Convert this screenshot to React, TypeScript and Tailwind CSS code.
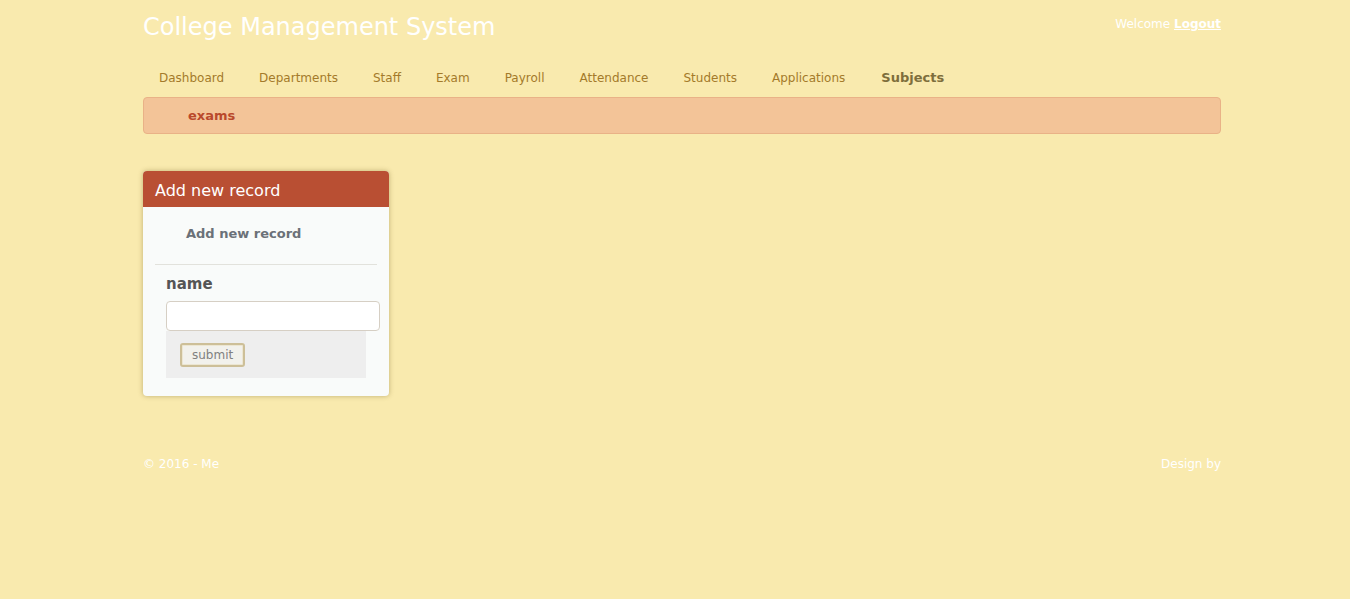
const NAV = [
  "Dashboard",
  "Departments",
  "Staff",
  "Exam",
  "Payroll",
  "Attendance",
  "Students",
  "Applications",
];

export default function App() {
  return (
    <div className="min-h-[599px] bg-[#f9eaae] font-['DejaVu_Sans',sans-serif]">
      <div className="ml-[143px] w-[1078px]">
        {/* Header */}
        <div className="flex items-start justify-between pt-[12px]">
          <h1 className="text-[24px] leading-[30px] text-white">College Management System</h1>
          <div className="mt-[3px] text-[12px] text-white">
            Welcome{" "}
            <a href="#" className="font-bold underline">
              Logout
            </a>
          </div>
        </div>

        {/* Nav */}
        <ul className="mt-[26px] flex h-[19px] items-center text-[12px]">
          {NAV.map((item) => (
            <li key={item} className="pl-[16px] pr-[19px] text-[#a47a2a]">
              {item}
            </li>
          ))}
          <li className="pl-[17px] pr-[19px] text-[13px] font-bold text-[#7e6e3c]">Subjects</li>
        </ul>

        {/* Breadcrumb */}
        <div className="mt-[10px] flex h-[37px] items-center rounded-[4px] border border-[#e9b287] bg-[#f3c498] pl-[44px]">
          <span className="text-[13px] font-bold text-[#b9492c]">exams</span>
        </div>

        {/* Card */}
        <div className="mt-[37px] w-[246px] overflow-hidden rounded-[4px] bg-[#f9fbfa] shadow-[0_0_5px_rgba(120,100,40,0.45)]">
          <div className="flex h-[36px] items-center bg-[#b94f33] px-[12px] pt-[3px] text-[16px] text-white">
            Add new record
          </div>
          <div className="px-[12px] pb-[18px]">
            <div className="pl-[31px] pt-[17px] text-[13px] font-bold text-[#6b7178]">Add new record</div>
            <hr className="mt-[20px] border-[#e2e2dc]" />
            <div className="pl-[11px] pt-[8px]">
              <label className="block text-[15px] font-bold text-[#555]">name</label>
              <input
                type="text"
                className="mt-[6px] block h-[30px] w-[214px] rounded-[4px] border border-[#d6cfc4] bg-white"
              />
              <div className="flex h-[47px] w-[200px] items-center bg-[#eeeeee] pl-[14px] pt-[1px]">
                <button className="h-[24px] rounded-[3px] border-2 border-[#cdbf98] bg-[#f2f1ec] px-[10px] text-[12px] text-[#808080] shadow-[inset_0_0_0_1px_#ece6d2]">
                  submit
                </button>
              </div>
            </div>
          </div>
        </div>

        {/* Footer */}
        <div className="mt-[59px] flex justify-between text-[12px] text-white">
          <span>© 2016 - Me</span>
          <span>Design by</span>
        </div>
      </div>
    </div>
  );
}
